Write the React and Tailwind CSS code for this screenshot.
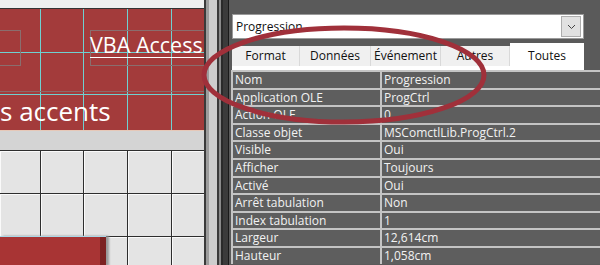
import React from "react";

const rows = [
  ["Nom", "Progression"],
  ["Application OLE", "ProgCtrl"],
  ["Action OLE", "0"],
  ["Classe objet", "MSComctlLib.ProgCtrl.2"],
  ["Visible", "Oui"],
  ["Afficher", "Toujours"],
  ["Activé", "Oui"],
  ["Arrêt tabulation", "Non"],
  ["Index tabulation", "1"],
  ["Largeur", "12,614cm"],
  ["Hauteur", "1,058cm"],
];

const font = { fontFamily: '"Open Sans", "Noto Sans", sans-serif' };

function LeftPanel() {
  return (
    <div className="w-[204px] h-full flex flex-col shrink-0 overflow-hidden">
      <div className="h-[9px] shrink-0 bg-[#efefef] border-b border-[#333]" />
      <div className="relative h-[121px] shrink-0 bg-[#a33b3b] overflow-hidden">
        {[40, 83, 127, 171].map((x) => (
          <div key={x} className="absolute top-0 bottom-0 w-px bg-[#6fd0d0]" style={{ left: x }} />
        ))}
        <div className="absolute left-0 right-0 top-[43px] h-px bg-[#6fd0d0]" />
        <div className="absolute left-0 right-0 top-[82px] h-px bg-[#8a6a6a]" />
        <div className="absolute left-0 right-0 top-[85px] h-px bg-[#6fd0d0]" />
        <div className="absolute left-[-2px] top-[21px] w-[23px] h-[36px] border border-[#8a6e6e]" />
        <div className="absolute left-[90px] top-[21px] w-[130px] h-[36px] border border-[#8a6e6e]" />
        <div
          className="absolute left-[90px] top-[22px] text-[21.5px] leading-[28px] text-white whitespace-nowrap"
          style={font}
        >
          VBA Access
        </div>
        <div className="absolute left-[90px] right-0 top-[48px] h-px bg-white" />
        <div
          className="absolute left-0 top-[86px] text-[26px] leading-[32px] text-white whitespace-nowrap"
          style={font}
        >
          s accents
        </div>
      </div>
      <div className="h-px shrink-0 bg-[#e6c8b8]" />
      <div className="h-[19px] shrink-0 bg-[#d4d4d4]" />
      <div className="relative flex-1 min-h-0 overflow-hidden bg-[#e4e4e4]">
        <div className="grid grid-cols-[40px_43px_44px_44px_33px] grid-rows-[43px_43px_43px]">
          {Array.from({ length: 15 }).map((_, i) => (
            <div
              key={i}
              className={
                "border-t border-[#2e2e2e] shadow-[inset_1px_1px_0_#fafafa] " +
                (i % 5 === 0 ? "" : "border-l")
              }
            />
          ))}
        </div>
        <div className="absolute left-0 top-[86px] w-[106px] h-[30px] bg-[#a83434] border-t border-[#a9d6e6] shadow-[3px_0_2px_#9a9a9a]">
          <div className="absolute right-0 top-0 bottom-0 w-[6px] bg-[#7c2222]" />
        </div>
      </div>
    </div>
  );
}

function Divider() {
  return (
    <div className="flex shrink-0 h-full">
      <div className="w-[2px] bg-[#3a3a3a]" />
      <div className="w-[3px] bg-[#9c9c9c]" />
      <div className="w-[8px] bg-[#cdcdcd]" />
      <div className="w-[2px] bg-[#3a3a3a]" />
      <div className="w-[2px] bg-[#8a8a8a]" />
      <div className="w-[2px] bg-[#2a2a2a]" />
      <div className="w-[5px] bg-[#3b3b3b]" />
      <div className="w-px bg-[#1a1a1a]" />
    </div>
  );
}

function Tab({ label, w, active }) {
  if (active) {
    return (
      <div
        className="h-[23px] bg-white flex items-center justify-center text-[12px] text-[#111] pt-[2px]"
        style={{ width: w, ...font }}
      >
        {label}
      </div>
    );
  }
  return (
    <div
      className="h-[20px] bg-[#f0f0f0] border-r border-[#d9d9d9] flex items-center justify-center text-[12px] text-[#111]"
      style={{ width: w, ...font }}
    >
      {label}
    </div>
  );
}

function RightPanel() {
  return (
    <div className="flex-1 bg-[#5a5a5a] flex flex-col pt-[14px] pl-[3px] overflow-hidden" style={font}>
      <div className="w-[352px] h-[25px] shrink-0 bg-white border border-[#9a9a9a] flex items-center justify-between pl-[3px] pr-[2px]">
        <span className="text-[12px] text-[#111]">Progression</span>
        <div className="w-[20px] h-[21px] bg-[#e1e1e1] border border-[#adadad] flex items-center justify-center">
          <svg width="9" height="6" viewBox="0 0 9 6">
            <path d="M1 1 L4.5 4.5 L8 1" fill="none" stroke="#444" strokeWidth="1" />
          </svg>
        </div>
      </div>
      <div className="flex items-end mt-[4px] w-[352px] h-[23px] shrink-0">
        <Tab label="Format" w={68} />
        <Tab label="Données" w={71} />
        <Tab label="Événement" w={70} />
        <Tab label="Autres" w={69} />
        <Tab label="Toutes" w={74} active />
      </div>
      <div className="h-[4px] w-[352px] shrink-0 bg-white" />
      <div className="flex flex-col shrink-0 ml-[-1px] border-l-2 border-[#c4c4c4]">
        {rows.map(([k, v]) => (
          <div key={k} className="flex h-[17.6px] shrink-0 border-t-2 border-[#c4c4c4] bg-[#5e5e5e] text-[12px] leading-[15px] text-[#f2f2f2]">
            <div className="w-[147px] pl-[2px] whitespace-nowrap overflow-hidden">{k}</div>
            <div className="flex-1 border-l-2 border-[#c4c4c4] pl-[2px] whitespace-nowrap">{v}</div>
          </div>
        ))}
      </div>
    </div>
  );
}

export default function App() {
  return (
    <div className="relative w-[600px] h-[265px] flex overflow-hidden bg-[#5a5a5a]">
      <LeftPanel />
      <Divider />
      <RightPanel />
      <svg className="absolute inset-0 pointer-events-none" width="600" height="265" viewBox="0 0 600 265">
        <ellipse cx="344" cy="75" rx="140" ry="47" fill="none" stroke="#a0303a" strokeWidth="5" />
      </svg>
    </div>
  );
}
